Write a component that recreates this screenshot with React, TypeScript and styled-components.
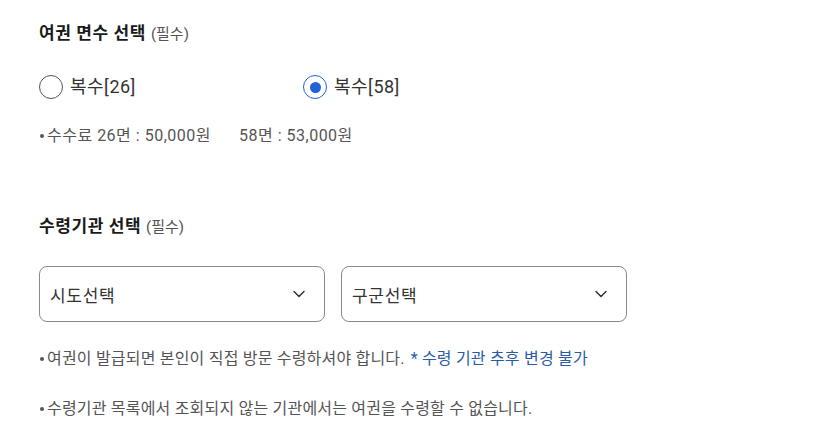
import styled, { createGlobalStyle } from "styled-components";

const GlobalStyle = createGlobalStyle`
  html, body {
    margin: 0;
    padding: 0;
    background: #ffffff;
  }
  body {
    font-family: Roboto, "Noto Sans CJK KR", sans-serif;
    color: #222;
  }
`;

const Page = styled.div`
  padding: 21px 39px 0;
  width: 826px;
  box-sizing: border-box;
`;

const Section = styled.section<{ $gap?: number }>`
  margin-top: ${(p) => p.$gap ?? 0}px;
`;

const Title = styled.h2`
  margin: 0;
  font-size: 17px;
  letter-spacing: 0.6px;
  line-height: 24px;
  font-weight: 700;
  color: #1a1a1a;

  span {
    font-size: 15px;
    letter-spacing: 0;
    font-weight: 400;
    color: #555;
  }
`;

const RadioRow = styled.div`
  display: grid;
  grid-template-columns: 264px 264px;
  margin-top: 29px;
`;

const RadioLabel = styled.label`
  display: flex;
  align-items: center;
  gap: 7px;
  font-size: 18px;
  letter-spacing: 0.5px;
  line-height: 24px;
  color: #333;
`;

const Circle = styled.span<{ $checked?: boolean }>`
  width: 24px;
  height: 24px;
  box-sizing: border-box;
  border-radius: 50%;
  border: ${(p) => (p.$checked ? "1.5px solid #1f63d6" : "1px solid #555")};
  display: flex;
  align-items: center;
  justify-content: center;

  &::after {
    content: "";
    display: ${(p) => (p.$checked ? "block" : "none")};
    width: 11px;
    height: 11px;
    border-radius: 50%;
    background: #1f63d6;
  }
`;

const Bullet = styled.p<{ $top: number; $wide?: boolean }>`
  margin: ${(p) => p.$top}px 0 0;
  font-size: 16px;
  letter-spacing: ${(p) => (p.$wide ? 0.5 : 0.2)}px;
  line-height: 22px;
  color: #555;
  display: flex;
  align-items: center;

  &::before {
    content: "";
    width: 4px;
    height: 4px;
    border-radius: 50%;
    background: #555;
    margin: 0 3px 0 1px;
  }
`;

const Gap = styled.span`
  display: inline-block;
  width: 28px;
`;

const Blue = styled.span`
  color: #2a5ba8;
  margin-left: 6px;
`;

const SelectRow = styled.div`
  display: flex;
  gap: 16px;
  margin-top: 27px;
`;

const SelectBox = styled.div`
  width: 286px;
  height: 56px;
  box-sizing: border-box;
  border: 1px solid #8a8a8a;
  border-radius: 8px;
  display: flex;
  align-items: center;
  justify-content: space-between;
  padding: 0 18px 0 10px;
  font-size: 17px;
  letter-spacing: 0.7px;
  color: #333;
`;

function Chevron() {
  return (
    <svg width="14" height="10" viewBox="0 0 14 10">
      <polyline
        points="2,2.5 7,7.5 12,2.5"
        fill="none"
        stroke="#333"
        strokeWidth="1.5"
        strokeLinecap="round"
        strokeLinejoin="round"
      />
    </svg>
  );
}

function Radio({ label, checked }: { label: string; checked?: boolean }) {
  return (
    <RadioLabel>
      <Circle $checked={checked} />
      {label}
    </RadioLabel>
  );
}

export default function App() {
  return (
    <>
      <GlobalStyle />
      <Page>
        <Section>
          <Title>
            여권 면수 선택 <span>(필수)</span>
          </Title>
          <RadioRow>
            <Radio label="복수[26]" />
            <Radio label="복수[58]" checked />
          </RadioRow>
          <Bullet $top={26} $wide>
            수수료 26면 : 50,000원<Gap />58면 : 53,000원
          </Bullet>
        </Section>

        <Section $gap={67}>
          <Title>
            수령기관 선택 <span>(필수)</span>
          </Title>
          <SelectRow>
            <SelectBox>
              시도선택
              <Chevron />
            </SelectBox>
            <SelectBox>
              구군선택
              <Chevron />
            </SelectBox>
          </SelectRow>
          <Bullet $top={26}>
            여권이 발급되면 본인이 직접 방문 수령하셔야 합니다.
            <Blue>* 수령 기관 추후 변경 불가</Blue>
          </Bullet>
          <Bullet $top={28}>
            수령기관 목록에서 조회되지 않는 기관에서는 여권을 수령할 수 없습니다.
          </Bullet>
        </Section>
      </Page>
    </>
  );
}
